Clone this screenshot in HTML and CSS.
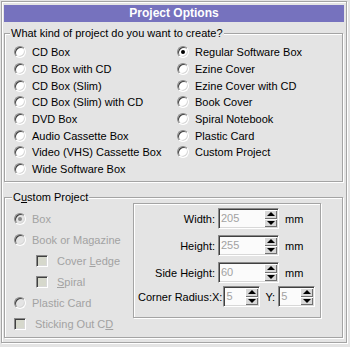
FILE: index.html
```html
<!DOCTYPE html>
<html>
<head>
<meta charset="utf-8">
<link rel="stylesheet" href="styles.css">
</head>
<body>
<div class="window">
  <div class="titlebar">Project Options</div>
  <fieldset class="group kind">
    <legend class="kind-legend">What kind of project do you want to create?</legend>
    <div class="kind-grid">
      <div class="opt"><span class="radio"></span><span>CD Box</span></div>
      <div class="opt"><span class="radio"></span><span>CD Box with CD</span></div>
      <div class="opt"><span class="radio"></span><span>CD Box (Slim)</span></div>
      <div class="opt"><span class="radio"></span><span>CD Box (Slim) with CD</span></div>
      <div class="opt"><span class="radio"></span><span>DVD Box</span></div>
      <div class="opt"><span class="radio"></span><span>Audio Cassette Box</span></div>
      <div class="opt"><span class="radio"></span><span>Video (VHS) Cassette Box</span></div>
      <div class="opt"><span class="radio"></span><span>Wide Software Box</span></div>
      <div class="opt"><span class="radio on"></span><span>Regular Software Box</span></div>
      <div class="opt"><span class="radio"></span><span>Ezine Cover</span></div>
      <div class="opt"><span class="radio"></span><span>Ezine Cover with CD</span></div>
      <div class="opt"><span class="radio"></span><span>Book Cover</span></div>
      <div class="opt"><span class="radio"></span><span>Spiral Notebook</span></div>
      <div class="opt"><span class="radio"></span><span>Plastic Card</span></div>
      <div class="opt"><span class="radio"></span><span>Custom Project</span></div>
    </div>
  </fieldset>
  <fieldset class="group custom">
    <legend class="custom-legend">C<u>u</u>stom Project</legend>
    <div class="custom-body">
      <div class="custom-opts">
        <div class="copt dis"><span class="radio dis on"></span><span>Box</span></div>
        <div class="copt dis"><span class="radio dis"></span><span>Book or Magazine</span></div>
        <div class="copt dis sub"><span class="check"></span><span>Cover <u>L</u>edge</span></div>
        <div class="copt dis sub"><span class="check"></span><span><u>S</u>piral</span></div>
        <div class="copt dis"><span class="radio dis"></span><span>Plastic Card</span></div>
        <div class="copt dis"><span class="check"></span><span>Sticking Out C<u>D</u></span></div>
      </div>
      <div class="dims">
        <div class="dim-row">
          <span class="dim-label">Width:</span>
          <span class="spin"><span class="val">205</span><span class="btns"><span class="up"></span><span class="dn"></span></span></span>
          <span class="unit">mm</span>
        </div>
        <div class="dim-row">
          <span class="dim-label">Height:</span>
          <span class="spin"><span class="val">255</span><span class="btns"><span class="up"></span><span class="dn"></span></span></span>
          <span class="unit">mm</span>
        </div>
        <div class="dim-row">
          <span class="dim-label">Side Height:</span>
          <span class="spin"><span class="val">60</span><span class="btns"><span class="up"></span><span class="dn"></span></span></span>
          <span class="unit">mm</span>
        </div>
        <div class="dim-row corner">
          <span class="corner-label">Corner Radius:</span><span class="axis">X:</span>
          <span class="spin small"><span class="val">5</span><span class="btns"><span class="up"></span><span class="dn"></span></span></span>
          <span class="axis y">Y:</span>
          <span class="spin small"><span class="val">5</span><span class="btns"><span class="up"></span><span class="dn"></span></span></span>
        </div>
      </div>
    </div>
  </fieldset>
</div>
</body>
</html>
```

FILE: styles.css
```css
* { box-sizing: border-box; }

html, body {
  margin: 0;
  padding: 0;
  background: #e4e4e4;
}

body {
  width: 350px;
  height: 347px;
  overflow: hidden;
  font: 11px "Liberation Sans", Arial, sans-serif;
  color: #000;
}

u { text-decoration: underline; text-underline-offset: 1px; }

.window {
  margin: 1px 0 0 1px;
  width: 346px;
  height: 342px;
  border: 1px solid #a4a4a4;
  box-shadow: inset 1px 1px 0 #fff, 1px 1px 0 #fff;
  padding: 3px 2px 0 2px;
}

.titlebar {
  height: 17px;
  line-height: 17px;
  background: #7672be;
  color: #fff;
  font-weight: bold;
  font-size: 12px;
  text-align: center;
}

.group {
  margin: 0;
  padding: 0;
  width: 339px;
  border: 1px solid #a4a4a4;
  box-shadow: inset 1px 1px 0 #fff, 1px 1px 0 #fff;
  min-inline-size: 0;
}

.group legend {
  padding: 0 1px;
  line-height: 13px;
  height: 13px;
  background: #e4e4e4;
}

.kind {
  margin-top: 5px;
  height: 155px;
}

.kind-legend { margin-left: 5px; }

.kind-grid {
  display: grid;
  grid-template-columns: 163px 1fr;
  grid-template-rows: repeat(8, 16.7px);
  grid-auto-flow: column;
  padding: 4px 0 0 9px;
}

.opt {
  display: flex;
  align-items: center;
  gap: 6px;
  white-space: nowrap;
}

.radio {
  flex: none;
  position: relative;
  width: 12px;
  height: 12px;
  border-radius: 50%;
  background: #fff;
  border: 1px solid;
  border-color: #8a8a8a #fff #fff #8a8a8a;
  box-shadow: inset 1px 1px 0 #404040, inset -1px -1px 0 #d8d8d8;
}

.radio.on::after {
  content: "";
  position: absolute;
  left: 3px;
  top: 3px;
  width: 4px;
  height: 4px;
  border-radius: 50%;
  background: #000;
}

.radio.dis {
  background: #e4e4e4;
}

.radio.dis.on::after {
  background: #8a8a8a;
}

.custom {
  margin-top: 9px;
  height: 147px;
}

.custom-legend { margin-left: 7px; }

.custom-body {
  display: flex;
  margin-top: -1px;
}

.custom-opts {
  width: 128px;
  padding: 5px 0 0 9px;
  display: flex;
  flex-direction: column;
}

.copt {
  height: 21px;
  display: flex;
  align-items: center;
  gap: 6px;
  white-space: nowrap;
}

.copt.dis { color: #a2a2a2; }

.copt .check { margin-right: 3px; }

.copt.sub { padding-left: 22px; }

.check {
  flex: none;
  width: 12px;
  height: 12px;
  background: #d6d8cc;
  border: 1px solid;
  border-color: #8a8a8a #fff #fff #8a8a8a;
  box-shadow: inset 1px 1px 0 #404040, inset -1px -1px 0 #d8d8d8;
}

.dims {
  width: 188px;
  height: 115px;
  border: 1px solid #a4a4a4;
  box-shadow: inset 1px 1px 0 #fff, 1px 1px 0 #fff;
  padding: 4px 0 0 0;
  display: flex;
  flex-direction: column;
  gap: 6px;
}

.dim-row {
  display: flex;
  align-items: center;
  height: 21px;
}

.dim-label {
  width: 81px;
  text-align: right;
  margin-right: 3px;
  white-space: nowrap;
}

.unit { margin-left: 6px; }

.spin {
  flex: none;
  display: flex;
  width: 61px;
  height: 21px;
  background: #fbfbfb;
  border: 1px solid;
  border-color: #8a8a8a #fff #fff #8a8a8a;
  box-shadow: inset 1px 1px 0 #404040, inset -1px -1px 0 #d8d8d8;
  padding: 1px;
}

.spin.small { width: 37px; }

.val {
  flex: 1;
  color: #a2a2a2;
  padding-left: 1px;
  line-height: 17px;
}

.btns {
  flex: none;
  width: 13px;
  display: flex;
  flex-direction: column;
}

.btns span {
  flex: 1;
  display: flex;
  align-items: center;
  justify-content: center;
  background: #d8d8d8;
  box-shadow: inset 1px 1px 0 #fff, inset -1px -1px 0 #707070;
}

.btns .up::before {
  content: "";
  border-left: 4px solid transparent;
  border-right: 4px solid transparent;
  border-bottom: 4px solid #000;
}

.btns .dn::before {
  content: "";
  border-left: 4px solid transparent;
  border-right: 4px solid transparent;
  border-top: 4px solid #000;
}

.corner {
  margin-top: -3px;
  padding-left: 4px;
  white-space: nowrap;
}

.axis { margin-right: 1px; }

.axis.y { margin-left: 5px; margin-right: 3px; }
```
